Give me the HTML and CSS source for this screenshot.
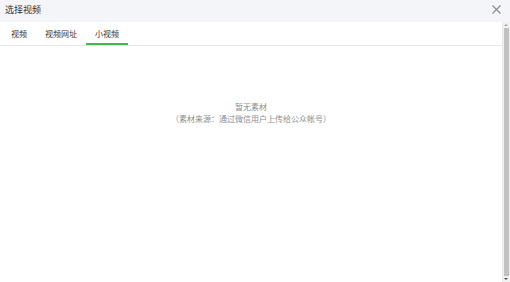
FILE: index.html
```html
<!DOCTYPE html>
<html lang="zh">
<head>
    <meta charset="UTF-8">
    <title>选择视频</title>
    <link rel="stylesheet" href="styles.css">
</head>
<body>
    <div class="dialog">
        <div class="dialog-head">
            <span class="dialog-title">选择视频</span>
            <span class="close">
                <svg width="9" height="9" viewBox="0 0 9 9"><path d="M0.5 0.5L8.5 8.5M8.5 0.5L0.5 8.5" stroke="#8a8a8a" stroke-width="1.1" fill="none"/></svg>
            </span>
        </div>
        <div class="dialog-body">
            <div class="main">
                <div class="tabs">
                    <span class="tab">视频</span>
                    <span class="tab">视频网址</span>
                    <span class="tab active">小视频</span>
                </div>
                <div class="empty">
                    <p>暂无素材</p>
                    <p>（素材来源：通过微信用户上传给公众帐号）</p>
                </div>
            </div>
            <div class="scrollbar">
                <div class="arrow-up"></div>
                <div class="thumb"></div>
                <div class="arrow-down"></div>
            </div>
        </div>
    </div>
</body>
</html>
```

FILE: styles.css
```css
body {
    margin: 0;
    font-family: "Noto Sans CJK SC", "Liberation Sans", sans-serif;
    color: #333;
    background-color: #fff;
}

.dialog {
    width: 510px;
    height: 282px;
    display: flex;
    flex-direction: column;
}

.dialog-head {
    height: 22px;
    box-sizing: border-box;
    background-color: #f4f5f9;
    display: flex;
    align-items: center;
    justify-content: space-between;
    padding: 0 9px 4px 5px;
    flex-shrink: 0;
}

.dialog-title {
    font-size: 9px;
    color: #333;
}

.close {
    display: flex;
}

.dialog-body {
    flex: 1;
    display: flex;
}

.main {
    flex: 1;
}

.tabs {
    height: 24px;
    box-sizing: border-box;
    border-bottom: 1px solid #e4e8eb;
    display: flex;
    align-items: stretch;
    padding-left: 2px;
}

.tab {
    font-size: 8px;
    color: #333;
    padding: 1px 9px 0;
    display: flex;
    align-items: center;
    box-sizing: border-box;
    border-bottom: 2px solid transparent;
}

.tab.active {
    border-bottom-color: #44b549;
}

.empty {
    text-align: center;
    font-size: 8px;
    color: #8d8d8d;
    padding-top: 55px;
    line-height: 12px;
}

.empty p {
    margin: 0;
}

.scrollbar {
    width: 7px;
    background-color: #f1f1f1;
    display: flex;
    flex-direction: column;
    border-left: 1px solid #e8e8e8;
}

.arrow-up,
.arrow-down {
    height: 6px;
    position: relative;
}

.arrow-up::after {
    content: "";
    position: absolute;
    left: 1px;
    top: 2px;
    border-left: 2px solid transparent;
    border-right: 2px solid transparent;
    border-bottom: 2px solid #a3a3a3;
}

.arrow-down::after {
    content: "";
    position: absolute;
    left: 1px;
    top: 2px;
    border-left: 2px solid transparent;
    border-right: 2px solid transparent;
    border-top: 2px solid #505050;
}

.thumb {
    flex: 1;
    background-color: #c1c1c1;
    margin: 0 1px;
}
```
